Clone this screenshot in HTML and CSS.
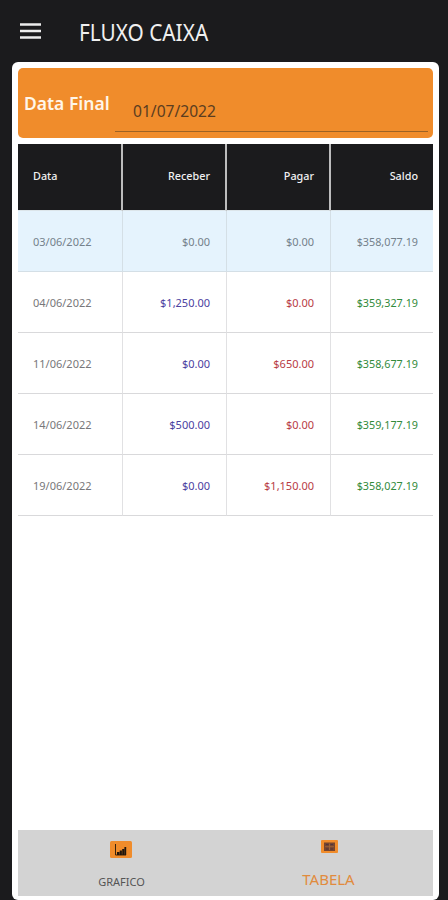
FILE: index.html
```html
<!DOCTYPE html>
<html lang="pt-BR">
<head>
<meta charset="utf-8">
<title>Fluxo Caixa</title>
<link rel="stylesheet" href="styles.css">
</head>
<body>
<header class="topbar">
  <svg class="menu" viewBox="0 0 21 16"><path d="M0 1.5h21M0 8h21M0 14.5h21"/></svg>
  <h1>FLUXO CAIXA</h1>
</header>
<main class="card">
  <section class="filter">
    <label class="filter-label">Data Final</label>
    <div class="filter-field"><span>01/07/2022</span></div>
  </section>
  <table class="flow">
    <thead><tr><th>Data</th><th>Receber</th><th>Pagar</th><th>Saldo</th></tr></thead>
    <tbody>
      <tr class="selected"><td>03/06/2022</td><td>$0.00</td><td>$0.00</td><td>$358,077.19</td></tr>
      <tr><td>04/06/2022</td><td>$1,250.00</td><td>$0.00</td><td>$359,327.19</td></tr>
      <tr><td>11/06/2022</td><td>$0.00</td><td>$650.00</td><td>$358,677.19</td></tr>
      <tr><td>14/06/2022</td><td>$500.00</td><td>$0.00</td><td>$359,177.19</td></tr>
      <tr><td>19/06/2022</td><td>$0.00</td><td>$1,150.00</td><td>$358,027.19</td></tr>
    </tbody>
  </table>
  <nav class="tabs">
    <div class="tab">
      <svg class="icon-chart" viewBox="0 0 22 17"><rect width="22" height="17" rx="1.5" fill="#f08c2b"/><path d="M5.5 3v11H16" fill="none" stroke="#3a230c"/><path d="M7 11h2.4v3H7zM9.7 9.5h2.2V14H9.7zM12.2 8h2v6h-2zM14.4 6h1.8v8h-1.8z" fill="#21160c"/></svg>
      <span>GRAFICO</span>
    </div>
    <div class="tab active">
      <svg class="icon-table" viewBox="0 0 17 13"><rect width="17" height="13" rx="1" fill="#f08c2b"/><rect x="3" y="2.5" width="11" height="8.5" fill="#75452f"/><path d="M4 6.7h9M8.5 3.5v6.5" stroke="#a36739" stroke-width=".8"/><path d="M5 4.5h2.5M9.5 4.5H12M5 9h2.5M9.5 9H12" stroke="#52343a"/></svg>
      <span>TABELA</span>
    </div>
  </nav>
</main>
</body>
</html>
```
FILE: styles.css
```css
* { box-sizing: border-box; }
body {
  margin: 0;
  height: 900px;
  overflow: hidden;
  display: flex;
  flex-direction: column;
  background: #1b1b1d;
  font-family: "Noto Sans", sans-serif;
}
.topbar {
  height: 62px;
  flex: none;
  display: flex;
  align-items: center;
  padding-left: 20px;
}
.menu { width: 21px; height: 16px; margin-right: 38px; fill: none; stroke: #ededed; stroke-width: 2.6; }
h1 {
  margin: 1px 0 0;
  font-size: 23px;
  line-height: 30px;
  font-weight: 400;
  color: #f0f0f0;
  white-space: nowrap;
  transform: scaleX(.905);
  transform-origin: left;
}
.card {
  flex: 1;
  margin: 0 9px 0 12px;
  padding: 6px 6px 4px;
  display: flex;
  flex-direction: column;
  background: #fff;
  border-radius: 6px;
}
.filter {
  height: 70px;
  flex: none;
  display: flex;
  padding: 0 5px 0 6px;
  background: #f08c2b;
  border-radius: 5px;
}
.filter-label {
  width: 91px;
  padding-top: 22px;
  font-size: 18.5px;
  line-height: 26px;
  font-weight: 600;
  color: #fff6e9;
  white-space: nowrap;
  transform: scaleX(.945);
  transform-origin: left;
}
.filter-field {
  flex: 1;
  height: 64px;
  padding: 31px 0 0 18px;
  border-bottom: 1px solid #9d6224;
  font-size: 15.6px;
  line-height: 24px;
  color: #5b3d20;
}
.flow {
  width: 415px;
  margin-top: 6px;
  table-layout: fixed;
  border-collapse: separate;
  border-spacing: 0;
  font-size: 11px;
}
th, td { padding: 1px 15px 0; text-align: right; border-right: 1px solid #e1e1e3; }
th:first-child, td:first-child { text-align: left; width: 105px; }
th:nth-child(2), th:nth-child(3) { width: 104px; padding-right: 15px; }
td:nth-child(2), td:nth-child(3) { padding-right: 16px; }
th:last-child, td:last-child { border-right: 0; }
th { height: 67px; padding-bottom: 4px; background: #1b1b1d; color: #f0f0f0; font-size: 10.8px; font-weight: 500; border-right: 2px solid #bdbdbd; border-bottom: 1px solid #dce5ea; }
td { height: 61px; border-bottom: 1px solid #d9d9db; color: #77777a; }
td:nth-child(2) { color: #4b419f; }
td:nth-child(3) { color: #b83c45; }
td:nth-child(4) { color: #328b3b; font-size: 10.8px; }
.flow .selected td { background: #e5f3fd; color: #74818b; border-color: #d4dfe6; }
.tabs {
  height: 66px;
  margin-top: auto;
  display: flex;
  background: #d3d3d3;
}
.tab {
  flex: 1;
  display: flex;
  flex-direction: column;
  align-items: center;
  padding-top: 11px;
  font-size: 11px;
  line-height: 16px;
  color: #555;
}
.tab span { margin-top: 16px; }
.icon-chart { width: 22px; height: 17px; margin-right: 1px; }
.icon-table { width: 17px; height: 13px; margin-left: 2px; }
.tab.active { padding: 10px 1px 0 0; font-size: 15px; line-height: 20px; color: #e18b3d; }
```
